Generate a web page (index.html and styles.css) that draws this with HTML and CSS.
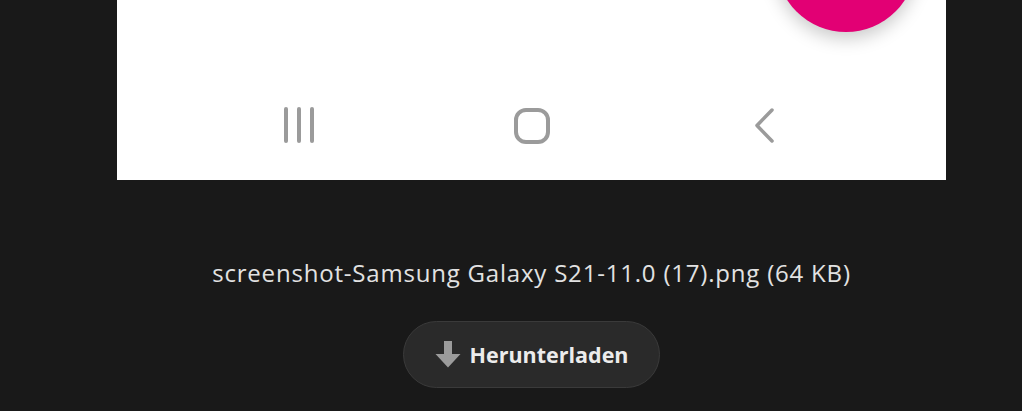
FILE: index.html
```html
<!DOCTYPE html>
<html lang="de">
<head>
  <meta charset="UTF-8">
  <title>Vorschau</title>
  <link rel="stylesheet" href="styles.css">
</head>
<body>
  <div class="viewer">
    <div class="shot">
      <div class="fab"></div>
      <div class="shot-body"></div>
      <div class="navbar">
        <span class="nav-item">
          <svg width="36" height="40" viewBox="0 0 36 40">
            <g stroke="#9b9b9b" stroke-width="4" stroke-linecap="round">
              <line x1="4" y1="3" x2="4" y2="35"/>
              <line x1="17" y1="3" x2="17" y2="35"/>
              <line x1="30" y1="3" x2="30" y2="35"/>
            </g>
          </svg>
        </span>
        <span class="nav-item">
          <svg width="40" height="40" viewBox="0 0 40 40">
            <rect x="4" y="4" width="32" height="32" rx="10" fill="none" stroke="#9b9b9b" stroke-width="4"/>
          </svg>
        </span>
        <span class="nav-item">
          <svg width="30" height="40" viewBox="0 0 30 40">
            <polyline points="23,4 8,19.5 23,35" fill="none" stroke="#9b9b9b" stroke-width="3.5" stroke-linecap="round" stroke-linejoin="round"/>
          </svg>
        </span>
      </div>
    </div>

    <p class="caption">screenshot-Samsung Galaxy S21-11.0 (17).png (64 KB)</p>

    <button class="download">
      <svg width="26" height="27" viewBox="0 0 26 27">
        <path d="M9 0 H17 V13 H25.5 L13 26.5 L0.5 13 H9 Z" fill="#9b9b9b"/>
      </svg>
      Herunterladen
    </button>
  </div>
</body>
</html>
```

FILE: styles.css
```css
body { margin: 0; background: #191919; font-family: "Open Sans", "Noto Sans", sans-serif; }
.viewer { padding-left: 41px; display: flex; flex-direction: column; align-items: center; }
.shot { position: relative; width: 829px; height: 180px; background: #fff; overflow: hidden; }
.fab { position: absolute; left: 659px; top: -108px; width: 140px; height: 140px; border-radius: 50%; background: #e20074; box-shadow: 0 6px 18px rgba(0,0,0,0.22); }
.shot-body { height: 106px; }
.navbar { display: grid; grid-template-columns: repeat(3, 232px); justify-content: center; }
.nav-item { display: flex; justify-content: center; }
.nav-item svg { display: block; }
.caption { margin: 77px 0 0; color: #e2e2e2; font-size: 24px; line-height: 32px; letter-spacing: 0.8px; }
.download { margin-top: 32px; width: 257px; height: 67px; display: flex; align-items: center; justify-content: center; gap: 9px; background: #2a2a2a; border: 1px solid #3a3a3a; border-radius: 34px; color: #ececec; font-family: "Open Sans", sans-serif; font-weight: 700; font-size: 21.5px; cursor: pointer; }
.download svg { display: block; }
```
